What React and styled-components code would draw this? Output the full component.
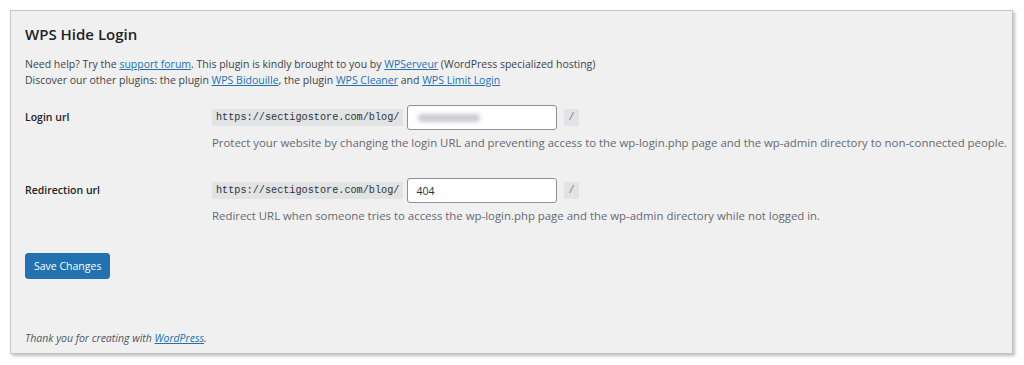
import React from 'react'
import styled, { createGlobalStyle } from 'styled-components'

const GlobalStyle = createGlobalStyle`
  html, body {
    margin: 0;
    background: #fff;
  }
  body {
    padding: 10px 10px 10px 10px;
    font-family: 'Open Sans', 'Noto Sans', sans-serif;
  }
`

const Panel = styled.div`
  width: 1003px;
  height: 344px;
  box-sizing: border-box;
  background: #f0f0f1;
  border: 1px solid #c3c4c7;
  box-shadow: 2px 2px 3px rgba(0, 0, 0, 0.25);
  padding: 12px 4px 0 14px;
  display: flex;
  flex-direction: column;
  color: #3c434a;
`

const Title = styled.h1`
  margin: 0 0 11px;
  font-size: 15px;
  font-weight: 600;
  color: #1d2327;
  line-height: 22px;
`

const Intro = styled.p`
  margin: 0;
  font-size: 10.5px;
  line-height: 16px;
`

const A = styled.a`
  color: #2271b1;
  text-decoration: underline;
`

const Form = styled.div`
  margin-top: 17px;
  display: flex;
  flex-direction: column;
  gap: 26px;
`

const Row = styled.div`
  display: grid;
  grid-template-columns: 187px 1fr;
`

const Label = styled.div`
  font-size: 10.5px;
  font-weight: 600;
  color: #1d2327;
  padding-top: 5px;
`

const Field = styled.div`
  display: flex;
  flex-direction: column;
  gap: 4px;
`

const InputLine = styled.div`
  display: flex;
  align-items: center;
  gap: 4px;
`

const Code = styled.code`
  font-family: 'Liberation Mono', 'DejaVu Sans Mono', monospace;
  font-size: 10.2px;
  background: #e2e3e4;
  color: #2c3338;
  padding: 0 4px;
  height: 17px;
  line-height: 17px;
  box-sizing: border-box;
`

const Input = styled.div`
  width: 150px;
  height: 25px;
  box-sizing: border-box;
  background: #fff;
  border: 1px solid #8c8f94;
  border-radius: 3px;
  padding: 0 8px;
  display: flex;
  align-items: center;
  font-size: 10.5px;
  color: #2c3338;
`

const Blur = styled.span`
  display: inline-block;
  width: 62px;
  height: 8px;
  background: #c9cbd0;
  border-radius: 4px;
  filter: blur(2px);
  margin-left: 2px;
`

const Slash = styled(Code)`
  margin-left: 3px;
  padding: 0 4px;
  color: #787c82;
`

const Desc = styled.p`
  margin: 0;
  font-size: 11.4px;
  line-height: 18px;
  color: #646970;
  white-space: nowrap;
`

const Button = styled.button`
  margin-top: 28px;
  align-self: flex-start;
  background: #2271b1;
  border: 1px solid #2271b1;
  border-radius: 3px;
  color: #fff;
  font-family: inherit;
  font-size: 10.5px;
  height: 26px;
  padding: 0 8px;
`

const Footer = styled.p`
  margin: auto 0 8px;
  font-size: 10.5px;
  font-style: italic;
  color: #50575e;
`

const fields = [
  {
    label: 'Login url',
    value: null,
    desc: 'Protect your website by changing the login URL and preventing access to the wp-login.php page and the wp-admin directory to non-connected people.',
  },
  {
    label: 'Redirection url',
    value: '404',
    desc: 'Redirect URL when someone tries to access the wp-login.php page and the wp-admin directory while not logged in.',
  },
]

export default function App() {
  return (
    <>
      <GlobalStyle />
      <Panel>
        <Title>WPS Hide Login</Title>
        <Intro>
          Need help? Try the <A href='#'>support forum</A>. This plugin is kindly brought to you by{' '}
          <A href='#'>WPServeur</A> (WordPress specialized hosting)
          <br />
          Discover our other plugins: the plugin <A href='#'>WPS Bidouille</A>, the plugin{' '}
          <A href='#'>WPS Cleaner</A> and <A href='#'>WPS Limit Login</A>
        </Intro>
        <Form>
          {fields.map((f) => (
            <Row key={f.label}>
              <Label>{f.label}</Label>
              <Field>
                <InputLine>
                  <Code>https://sectigostore.com/blog/</Code>
                  <Input>{f.value ? f.value : <Blur />}</Input>
                  <Slash>/</Slash>
                </InputLine>
                <Desc>{f.desc}</Desc>
              </Field>
            </Row>
          ))}
        </Form>
        <Button type='button'>Save Changes</Button>
        <Footer>
          Thank you for creating with <A href='#'>WordPress</A>.
        </Footer>
      </Panel>
    </>
  )
}
